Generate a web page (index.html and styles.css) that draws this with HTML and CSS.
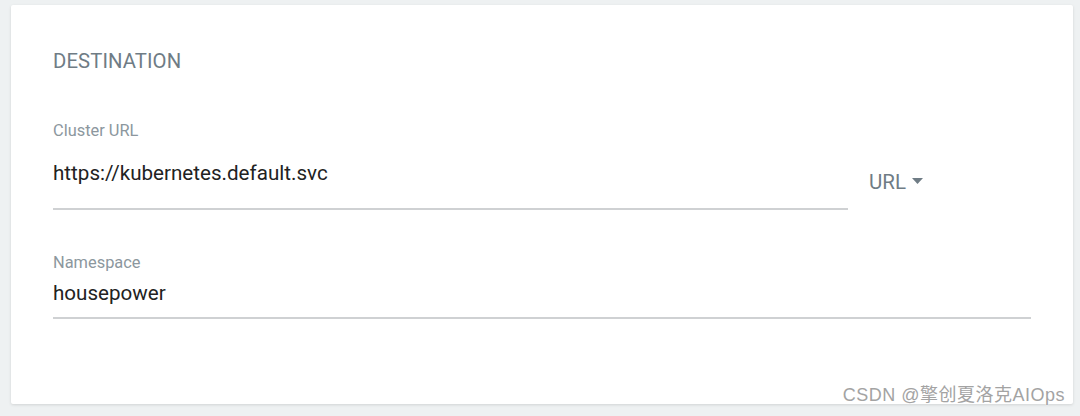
FILE: index.html
```html
<!DOCTYPE html>
<html>
<head>
<meta charset="utf-8">
<link rel="stylesheet" href="styles.css">
</head>
<body>
<div class="page">
  <div class="card">
    <div class="title">DESTINATION</div>
    <div class="row">
      <div class="field field-cluster">
        <div class="label">Cluster URL</div>
        <div class="value value-cluster">https://kubernetes.default.svc</div>
      </div>
      <div class="dropdown">
        <span class="dropdown-text">URL</span>
        <svg class="caret" width="11" height="6" viewBox="0 0 11 6"><path d="M0 0 L11 0 L5.5 6 Z" fill="#6f7c85"/></svg>
      </div>
    </div>
    <div class="field field-ns">
      <div class="label">Namespace</div>
      <div class="value value-ns">housepower</div>
    </div>
  </div>
  <div class="watermark">CSDN @擎创夏洛克AIOps</div>
</div>
</body>
</html>
```
FILE: styles.css
```css
html, body {
  margin: 0;
  padding: 0;
  background: #eef1f2;
}
.page {
  position: relative;
  width: 1080px;
  height: 416px;
  padding: 5px 7px 0 11px;
  box-sizing: border-box;
  font-family: Roboto, "Liberation Sans", sans-serif;
}
.card {
  background: #fff;
  height: 399px;
  box-sizing: border-box;
  padding: 44px 42px 0 42px;
  box-shadow: 0 1px 3px rgba(0, 0, 0, 0.12);
  border-radius: 2px;
}
.title {
  font-size: 20.3px;
  line-height: 24px;
  color: #6f7c85;
  letter-spacing: 0.1px;
}
.row {
  display: flex;
  align-items: flex-start;
  margin-top: 48px;
  gap: 21px;
}
.field {
  border-bottom: 2px solid #cfd1d3;
}
.field-cluster {
  flex: 1;
}
.label {
  font-size: 16.4px;
  line-height: 20px;
  color: #8c979e;
}
.value {
  font-size: 20.6px;
  line-height: 24px;
  color: #222;
}
.value-cluster {
  margin-top: 20px;
  padding-bottom: 23px;
}
.dropdown {
  width: 162px;
  margin-top: 49px;
  display: flex;
  align-items: center;
  gap: 6px;
}
.dropdown-text {
  font-size: 20.5px;
  line-height: 24px;
  color: #6f7c85;
}
.caret {
  display: block;
  margin-top: -2px;
}
.field-ns {
  margin-top: 43px;
}
.value-ns {
  margin-top: 8px;
  padding-bottom: 12px;
}
.watermark {
  position: absolute;
  right: 15px;
  top: 383px;
  font-family: "Liberation Sans", "Noto Sans CJK SC", sans-serif;
  font-size: 18px;
  letter-spacing: 0.5px;
  line-height: 24px;
  color: #a3a3a3;
  text-shadow: 0 0 2px #fff, 0 0 1px #fff;
}
```
